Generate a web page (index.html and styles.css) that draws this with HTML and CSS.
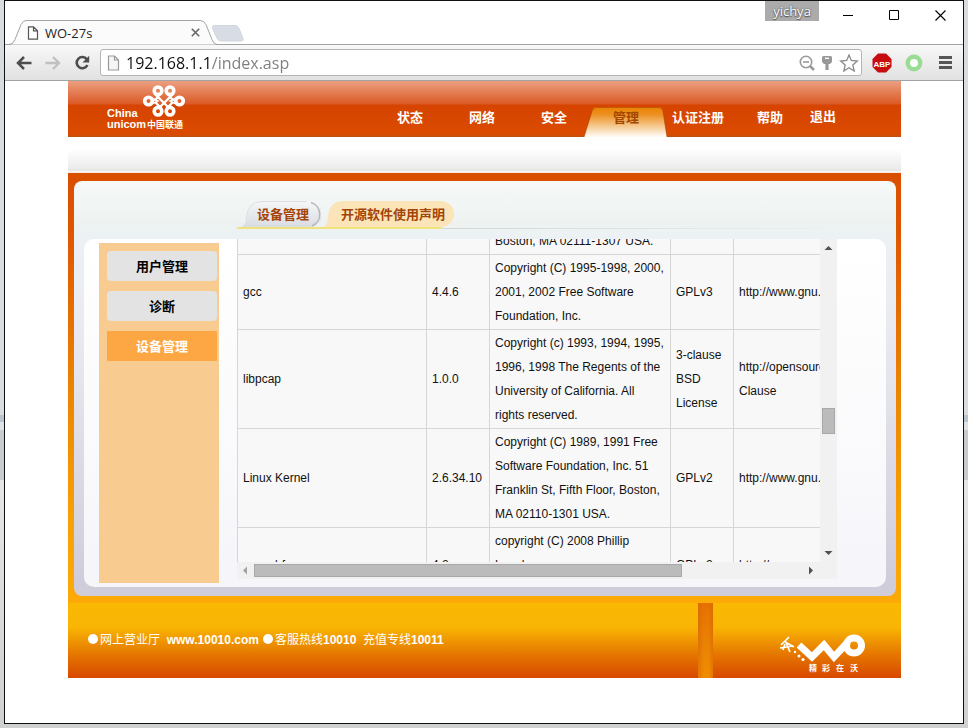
FILE: index.html
```html
<!DOCTYPE html>
<html lang="zh-CN">
<head>
<meta charset="utf-8">
<title>WO-27s</title>
<link rel="stylesheet" href="styles.css">
</head>
<body>
<div class="window">
  <div class="titlebar">
    <div class="tab">
      <svg class="tab-shape" width="216" height="25" viewBox="0 0 216 25"><path d="M0 24.500h4q4 0 6-5l6-15q2-4 5-4h174q4 0 6 4l6 15q2 5 5 5h4" fill="#fbfbfb" stroke="#a3a3a3"/></svg>
      <svg class="tab-icon" width="12" height="14" viewBox="0 0 12 14"><path d="M1.500.8h5l4 4v8.400h-9zM6.500.8v4h4" fill="#fff" stroke="#555" stroke-width="1.200"/></svg>
      <span class="tab-title">WO-27s</span>
      <button class="tab-close" aria-label="Close tab"><svg width="9" height="9" viewBox="0 0 9 9"><path d="M.8.8l7.400 7.400M8.200.8L.8 8.200" stroke="#666" stroke-width="1.600"/></svg></button>
    </div>
    <button class="new-tab" aria-label="New tab"><svg width="33" height="17" viewBox="0 0 33 17"><path d="M4 .5h20q3 0 4 3l4 10q1 2.500-2 2.500H10q-3 0-4-3L1.500 3.500Q.5.5 4 .5z" fill="#d8dde5" stroke="#d0d5dc"/></svg></button>
    <span class="user">yichya</span>
    <button class="win-btn" aria-label="Minimize"><svg width="11" height="11" viewBox="0 0 11 11"><path d="M0 5.500h10" stroke="#000"/></svg></button>
    <button class="win-btn" aria-label="Maximize"><svg width="11" height="11" viewBox="0 0 11 11"><path d="M.5.5h9v9h-9z" fill="none" stroke="#000"/></svg></button>
    <button class="win-btn" aria-label="Close"><svg width="11" height="11" viewBox="0 0 11 11"><path d="M.5.500l10 10M10.500.5l-10 10" stroke="#000" stroke-width="1.100"/></svg></button>
  </div>

  <div class="toolbar">
    <button class="tool" aria-label="Back"><svg width="16" height="14" viewBox="0 0 16 14"><path d="M15.500 7H2.500M8 1L2 7l6 6" fill="none" stroke="#4d4d4d" stroke-width="2.500"/></svg></button>
    <button class="tool" aria-label="Forward"><svg width="16" height="14" viewBox="0 0 16 14"><path d="M.5 7h13M8 1l6 6-6 6" fill="none" stroke="#c0c0c0" stroke-width="2.300"/></svg></button>
    <button class="tool" aria-label="Reload"><svg width="16" height="16" viewBox="0 0 16 16"><path d="M12.800 4.300A5.600 5.600 0 1 0 13.400 10" fill="none" stroke="#4d4d4d" stroke-width="2.600"/><path d="M15.200.8v6.700H8.500z" fill="#4d4d4d"/></svg></button>
    <div class="omnibox">
      <svg width="13" height="16" viewBox="0 0 13 16"><path d="M1.500 1h6l4 4v10h-10zM7.500 1v4h4" fill="#f6f6f6" stroke="#999" stroke-width="1.200"/></svg>
      <input class="url" type="text" value="192.168.1.1/index.asp" aria-label="Address">
      <svg width="16" height="16" viewBox="0 0 16 16"><circle cx="7" cy="7" r="5.700" fill="none" stroke="#999" stroke-width="1.600"/><path d="M4 7h6" stroke="#999" stroke-width="1.600"/><path d="M11 11l4 4" stroke="#999" stroke-width="2.500"/></svg>
      <svg width="12" height="16" viewBox="0 0 12 16"><path d="M2 1h8l1 1v5l-2 2H7.600v6H4.400V9H3L1 7V2z" fill="#999"/><path d="M4 3.300h4" stroke="#fff" stroke-width="1.400"/></svg>
      <svg width="20" height="18" viewBox="0 0 20 18"><path d="M10 1l2.300 5.500 6 .5-4.500 4 1.400 6-5.200-3.200L4.800 17l1.400-6L1.700 7l6-.5z" fill="#fff" stroke="#8a8a8a" stroke-width="1.300"/></svg>
    </div>
    <button class="tool" aria-label="Adblock Plus"><svg width="20" height="20" viewBox="0 0 20 20"><path d="M6 .5h8L19.500 6v8L14 19.500H6L.5 14V6z" fill="#c70d10"/><text x="10" y="13.500" class="abp">ABP</text></svg></button>
    <button class="tool" aria-label="Extension"><svg width="18" height="18" viewBox="0 0 18 18"><circle cx="9" cy="9" r="6.200" fill="#fff" stroke="#9bdc94" stroke-width="4.500"/></svg></button>
    <button class="tool menu" aria-label="Menu"><svg width="13" height="13" viewBox="0 0 13 13"><path d="M0 1.500h13M0 6.500h13M0 11.500h13" stroke="#555" stroke-width="2.800"/></svg></button>
  </div>

  <div class="page">
    <div class="site">
      <header class="header">
        <svg class="logo" width="82" height="48" viewBox="0 0 82 48">
          <g fill="none" stroke="#fff" stroke-width="3.600">
            <circle cx="51" cy="5.800" r="3.800"/><circle cx="63" cy="5.800" r="3.800"/>
            <circle cx="41.500" cy="16" r="3.800"/><circle cx="72.500" cy="16" r="3.800"/>
            <circle cx="51" cy="26.200" r="3.800"/><circle cx="63" cy="26.200" r="3.800"/>
            <path d="M48 9l12.500 12.500M66 9L53.500 21.500M54 23L48 17M60 23l6-6M48 15l4-4M66 15l-4-4" stroke-width="2.400"/>
            <path d="M45 13.500l5 2.500-5 2.500M69 13.500l-5 2.500 5 2.500" stroke-width="2.400"/>
          </g>
          <text x="0" y="32" class="logo-latin">China</text>
          <text x="0" y="43" class="logo-latin">unicom</text>
          <text x="40" y="43" class="logo-cjk">中国联通</text>
        </svg>
        <nav class="nav">
          <a href="#">状态</a>
          <a href="#">网络</a>
          <a href="#">安全</a>
          <a href="#" class="active"><svg class="nav-shape" width="83" height="30" viewBox="0 0 83 30"><defs><linearGradient id="glow" x1="0" y1="0" x2="0" y2="1"><stop offset="0" stop-color="#e98200"/><stop offset=".25" stop-color="#ec9021"/><stop offset="1" stop-color="#fffdf8"/></linearGradient></defs><path d="M0 30L8 4q1-4 4-4h63q3 0 4 4l4 26z" fill="url(#glow)"/><path d="M0 30L8 4q1-3.500 4-3.500h63q3 0 4 3.500l4 26" fill="none" stroke="#a84300" stroke-opacity=".6"/></svg><span>管理</span></a>
          <a href="#">认证注册</a>
          <a href="#">帮助</a>
          <a href="#" class="exit">退出</a>
        </nav>
      </header>
      <div class="subbar"></div>

      <main class="main">
        <div class="panel">
          <div class="tabs">
            <a href="#" class="pill pill-gray"><svg width="80" height="26" viewBox="0 0 80 26"><defs><linearGradient id="silver" x1="0" y1="0" x2="0" y2="1"><stop offset="0" stop-color="#f6f7f8"/><stop offset="1" stop-color="#d9dce1"/></linearGradient></defs><path d="M0 26Q5 24 6 14 8 0 21 0h45a13 13 0 0 1 4 26z" fill="url(#silver)"/><path d="M70 1.500a12.500 12.500 0 0 1 1 23.500" fill="none" stroke="#b4b6ba" stroke-width="1.500"/><path d="M5 19Q6 .5 21 .5h45" fill="none" stroke="#dcdedf"/></svg><span>设备管理</span></a>
            <a href="#" class="pill pill-sand"><svg width="134" height="26" viewBox="0 0 134 26"><path d="M0 26q5-2 5-10Q6 0 20 0h98a13 13 0 0 1 0 26z" fill="#fae4b8"/></svg><span>开源软件使用声明</span></a>
          </div>
          <div class="card">
            <nav class="side">
              <a href="#">用户管理</a>
              <a href="#">诊断</a>
              <a href="#" class="current">设备管理</a>
            </nav>
            <section class="scroller">
              <div class="viewport">
                <table class="licenses">
                  <colgroup><col class="c-name"><col class="c-ver"><col class="c-copy"><col class="c-lic"><col class="c-url"></colgroup>
                  <tbody>
                    <tr><td></td><td></td><td>Boston, MA 02111-1307 USA.</td><td></td><td></td></tr>
                    <tr><td>gcc</td><td>4.4.6</td><td>Copyright (C) 1995-1998, 2000, 2001, 2002 Free Software Foundation, Inc.</td><td>GPLv3</td><td>http://www.gnu.org/licenses/</td></tr>
                    <tr><td>libpcap</td><td>1.0.0</td><td>Copyright (c) 1993, 1994, 1995, 1996, 1998 The Regents of the University of California. All<br>rights reserved.</td><td>3-clause BSD License</td><td>http://opensource.org/licenses/BSD-3-<br>Clause</td></tr>
                    <tr><td>Linux Kernel</td><td>2.6.34.10</td><td>Copyright (C) 1989, 1991 Free Software Foundation, Inc. 51 Franklin St, Fifth Floor, Boston, MA 02110-1301 USA.</td><td>GPLv2</td><td>http://www.gnu.org/licenses/</td></tr>
                    <tr><td>squashfs</td><td>4.2</td><td>copyright (C) 2008 Phillip<br>Lougher<br>phillip@lougher.demon.co.uk</td><td>GPLv2</td><td>http://www.gnu.org/licenses/</td></tr>
                  </tbody>
                </table>
              </div>
              <div class="bar bar-v">
                <svg width="17" height="17" viewBox="0 0 17 17"><path d="M4.500 11h8l-4-4z" fill="#505050"/></svg>
                <div class="track"><div class="thumb"></div></div>
                <svg width="17" height="17" viewBox="0 0 17 17"><path d="M4.500 6h8l-4 4z" fill="#505050"/></svg>
              </div>
              <div class="bar bar-h">
                <svg width="17" height="17" viewBox="0 0 17 17"><path d="M10 4.500v8l-4-4z" fill="#a3a3a3"/></svg>
                <div class="track"><div class="thumb"></div></div>
                <svg width="17" height="17" viewBox="0 0 17 17"><path d="M6 4.500v8l4-4z" fill="#505050"/></svg>
              </div>
              <div class="corner"></div>
            </section>
          </div>
        </div>
      </main>

      <footer class="footer">
        <p class="contact"><i class="dot"></i>网上营业厅  <b>www.10010.com</b><i class="dot"></i>客服热线<b>10010</b>  充值专线<b>10011</b></p>
        <div class="pillar"></div>
        <svg class="wo" width="88" height="42" viewBox="0 0 88 42">
          <g fill="none" stroke="#fff">
            <path d="M20 11l13 12 12-12 10 12L69 8" stroke-width="7"/>
            <circle cx="75" cy="11.500" r="7.500" stroke-width="7"/>
            <path d="M2 11l8-8M1 14l13-2M6 6l5 12M6 10l-2 6M8 9l7 4" stroke-width="1.700"/>
          </g>
          <g fill="#fff"><circle cx="16" cy="18" r="1.200"/><circle cx="20" cy="22" r="1.500"/><circle cx="24" cy="25.500" r="1.600"/></g>
          <g class="wo-text"><text x="30" y="37">精</text><text x="43" y="37">彩</text><text x="57" y="37">在</text><text x="71" y="37">沃</text></g>
        </svg>
      </footer>
    </div>
  </div>
</div>
</body>
</html>
```

FILE: styles.css
```css
* { box-sizing: border-box; }

body {
  margin: 0;
  padding: 0 4px 4px;
  min-height: 100vh;
  background: linear-gradient(#d9dcdf 0 57%, #b9c6d0 57% 58%, #dfe3e6 58% 59%, #c9cccf 59% 66%, #e3e5e7 66%, #cfd1d0);
  font-family: "Liberation Sans", "Noto Sans CJK SC", sans-serif;
  font-size: 12px;
}

a { text-decoration: none; color: inherit; }
button { border: 0; padding: 0; background: none; display: grid; place-items: center; }
svg { display: block; flex: none; }

.window {
  min-height: calc(100vh - 4px);
  border: 1px solid #111;
  background: #fff;
}

/* Browser chrome */
.titlebar {
  display: flex;
  align-items: flex-start;
  height: 44px;
  border-bottom: 1px solid #a3a3a3;
}

.tab {
  position: relative;
  display: flex;
  align-items: center;
  gap: 6px;
  width: 206px;
  height: 25px;
  margin-top: 19px;
  padding: 0 10px 0 22px;
}
.tab-shape { position: absolute; left: 0; top: 0; }
.tab-icon { position: relative; }
.tab-title { position: relative; flex: 1; font: 13px/24px "Open Sans", sans-serif; color: #222; }
.tab-close { position: relative; width: 11px; height: 24px; }
.new-tab { margin-top: 24px; }

.user {
  width: 54px;
  height: 20px;
  margin: 0 6px 0 auto;
  background: #ababab;
  color: #fff;
  font: 13px/20px "Open Sans", sans-serif;
  text-align: center;
  text-shadow: 0 0 2px #444, 0 1px 1px #555;
}
.win-btn { width: 46px; height: 28px; }

.toolbar {
  display: flex;
  align-items: center;
  gap: 13px;
  height: 36px;
  padding: 0 11px;
  border-bottom: 1px solid #a3a3a3;
  background: linear-gradient(#f8f8f8, #e1e1e1);
}
.tool { flex: none; }
.menu { margin-left: 3px; }
.omnibox {
  display: flex;
  flex: 1;
  align-items: center;
  gap: 6px;
  height: 27px;
  margin: 0 -3px;
  padding: 0 2px 0 6px;
  border: 1px solid #b5b5b5;
  border-radius: 3px;
  background: #fff;
}
.url {
  flex: 1;
  min-width: 0;
  height: 24px;
  padding: 0;
  border: 0;
  outline: 0;
  font: 16px/24px "Open Sans", sans-serif;
  color: transparent;
  background: linear-gradient(90deg, #111 86px, #7d7d7d 86px);
  -webkit-background-clip: text;
  background-clip: text;
}
.abp { font: bold 8px "Liberation Sans", sans-serif; fill: #fff; text-anchor: middle; }

/* Router site */
.page { padding-left: 1px; }
.site { max-width: 833px; margin: 0 auto; }

.header {
  display: flex;
  justify-content: space-between;
  align-items: flex-end;
  height: 56px;
  padding: 0 61px 0 39px;
  background: linear-gradient(#eb9f80, #dc5a26 23px, #d64400 24px, #da4b00 54px, #bf5010 55px);
  color: #fff;
}
.logo { align-self: center; }
.logo-latin { font: bold 11px "Liberation Sans", sans-serif; fill: #fff; }
.logo-cjk { font: bold 9px "Noto Sans CJK SC", sans-serif; fill: #fff; }

.nav { display: flex; font-size: 13px; font-weight: bold; line-height: 22px; }
.nav a { position: relative; width: 72px; height: 30px; text-align: center; }
.nav .exit { width: 34px; line-height: 20px; }
.nav .active { color: #a34700; }
.nav-shape { position: absolute; left: -6px; top: 0; }
.nav span { position: relative; }

.subbar {
  height: 36px;
  background: linear-gradient(#fff 12px, #ebebeb 32px, #dedede 33px, #f6f6f6 34px, #f6e8df);
}

.main {
  padding: 8px 5px 7px 6px;
  background: linear-gradient(#d94f00, #df5600 60px, #ea8000 200px, #f89f04 340px, #fcaa08);
}
.panel {
  padding: 0 10px 9px;
  border-radius: 8px;
  background: linear-gradient(#f6f9f8, #edf2f1 45px, #ecf1f5 58px, #e9eaf1 150px, #cfcdda 400px);
}

.tabs {
  display: flex;
  align-items: flex-end;
  height: 58px;
  margin-left: 153px;
  margin-right: 49px;
  padding: 0 0 10px 4px;
  background:
    linear-gradient(#f0e27d, #f0e27d) 0 46px / 205px 2px no-repeat,
    linear-gradient(90deg, #d3d6d7, #e9eeee) 205px 47px / 380px 1px no-repeat;
  color: #a34408;
  font-size: 13px;
  font-weight: bold;
  line-height: 28px;
}
.pill { position: relative; height: 28px; text-align: center; }
.pill svg { position: absolute; left: 0; top: 0; }
.pill span { position: relative; }
.pill-gray { width: 82px; padding-left: 2px; }
.pill-sand { width: 134px; padding-left: 6px; }

.card {
  display: flex;
  gap: 18px;
  padding: 0 49px 4px 15px;
  border-radius: 10px;
  background: linear-gradient(#fff, #fafafc 60%, #f5f5fa);
}

.side {
  display: flex;
  flex-direction: column;
  gap: 10px;
  width: 120px;
  height: 340px;
  margin-top: 4px;
  padding: 8px 2px 0 8px;
  background: #f8cb90;
  color: #000;
  font-size: 13px;
  font-weight: bold;
  line-height: 32px;
  text-align: center;
}
.side a { height: 30px; border-radius: 4px; background: #e3e3e3; }
.side .current { border-radius: 1px; background: #fca743; color: #fff; }

.scroller {
  display: grid;
  flex: 1;
  grid-template-columns: minmax(0, 1fr) 17px;
  grid-template-rows: 323px 17px;
  align-content: start;
  min-width: 0;
}
.viewport { overflow: hidden; background: #f8f8f8; }

.licenses {
  width: 737px;
  margin-top: -12px;
  border-spacing: 0;
  border-left: 1px solid #d6d6d6;
  border-top: 1px solid #d6d6d6;
  table-layout: fixed;
  color: #111;
  line-height: 24px;
}
.licenses td {
  padding: 1px 0 1px 5px;
  border-right: 1px solid #d6d6d6;
  border-bottom: 1px solid #d6d6d6;
}
.c-name { width: 189px; }
.c-ver, .c-lic { width: 63px; }
.c-copy { width: 181px; }
.c-url { width: 240px; }

.bar { display: flex; background: #f1f1f1; }
.bar-v { flex-direction: column; }
.track { flex: 1; }
.thumb { border: 1px solid #a8a8a8; background: #bbb; }
.bar-v .track { padding: 152px 2px 0; }
.bar-v .thumb { height: 26px; }
.bar-h .track { padding: 2px 0; }
.bar-h .thumb { width: 78%; height: 13px; }
.corner { background: #f1f1f1; }

.footer {
  display: flex;
  height: 75px;
  padding: 0 34px 0 20px;
  background: linear-gradient(#fab803, #f9b504 24px, #e67a00 50px, #d84800);
  color: #fff;
}
.contact {
  display: flex;
  flex: 1;
  height: 20px;
  margin: 27px 0 0;
  line-height: 20px;
  white-space: pre;
}
.dot { width: 10px; height: 10px; margin: 4px 2px 0 0; border-radius: 50%; background: #fff; }
.contact b + .dot { margin-left: 4px; }
.pillar {
  width: 15px;
  margin-right: 66px;
  background: linear-gradient(90deg, #d8640088, transparent 40% 70%, #d8640088), linear-gradient(#e57200, #ea8203 40px, #f08c00);
}
.wo { margin-top: 31px; }
.wo-text { font: bold 8px "Noto Sans CJK SC", sans-serif; fill: #fff; }
```
